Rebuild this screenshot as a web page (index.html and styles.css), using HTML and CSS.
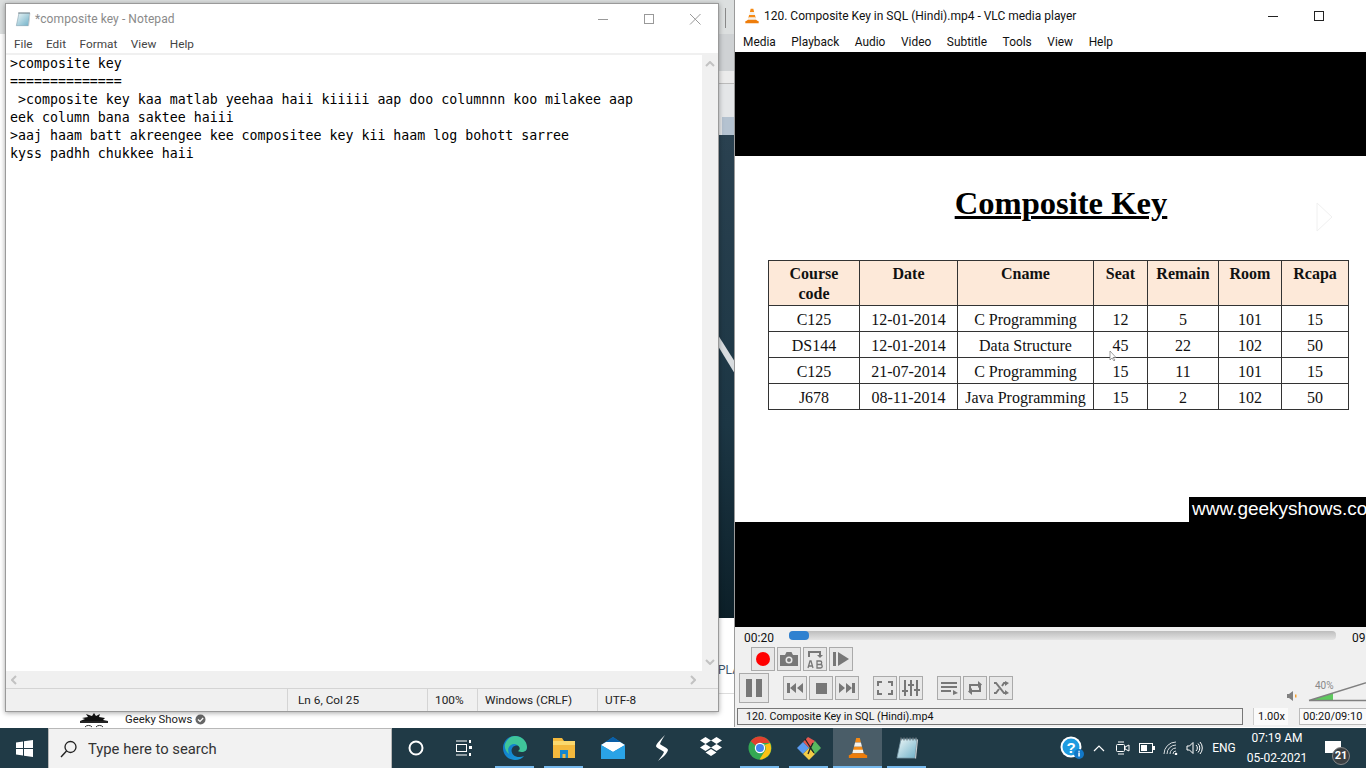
FILE: index.html
```html
<!DOCTYPE html>
<html lang="en">
<head>
    <meta charset="UTF-8">
    <meta name="viewport" content="width=device-width, initial-scale=1.0">
    <title>Notepad and VLC</title>
    <link rel="stylesheet" href="styles.css">
</head>
<body>
    <svg class="defs" width="0" height="0">
        <defs>
            <linearGradient id="pad-fill" x1="0" y1="0" x2="1" y2="1">
                <stop offset="0" stop-color="#eef7f7"/>
                <stop offset="1" stop-color="#6fb0c8"/>
            </linearGradient>
            <symbol id="i-cone" viewBox="0 0 24 24">
                <path d="M10 1h4l1.200 5H8.800z" fill="#f58a14"/>
                <path d="M8.800 6h6.400l1.200 4.600H7.600z" fill="#f2f0ec"/>
                <path d="M7.600 10.600h8.800l1.200 4.800H6.400z" fill="#f58a14"/>
                <path d="M6.700 14h10.600l.9 3.600H5.800z" fill="#f4f1ea"/>
                <path d="M5.800 17.600h12.400l1.800 1.400 2 1v3H2v-3l2-1z" fill="#ee7d0b"/>
            </symbol>
            <symbol id="i-pad" viewBox="0 0 24 24">
                <path d="M6 3h16l-2 19H2z" fill="url(#pad-fill)" stroke="#7a99a8" stroke-width=".8"/>
                <path d="M20 22l2-19 1 1-2 19z" fill="#c9ced2"/>
                <path d="M6 1.500v3M9 1.500v3M12 1.500v3M15 1.500v3M18 1.500v3M21 1.500v3" stroke="#6d7880" stroke-width="1.200"/>
            </symbol>
        </defs>
    </svg>

    <div class="desktop">
        <!-- browser page left behind the two windows -->
        <div class="backdrop">
            <div class="bd-top"><span class="bd-tick"></span></div>
            <div class="bd-band"></div>
            <div class="bd-band2"></div>
            <div class="bd-band3"><span class="bd-glass"></span></div>
            <div class="bd-video">
                <svg class="bd-slash" width="17" height="60" viewBox="0 0 17 60"><path d="M0 10l17 27v12L0 21z" fill="#d8dcdf"/></svg>
            </div>
            <div class="bd-page">
                <span class="bd-pla">PLA</span>
            </div>
            <div class="channel">
                <svg class="channel-pic" width="32" height="16" viewBox="0 0 32 16">
                    <path d="M2 9l5-2-3-1 6-1-2-3 6 2 2-3 2 3 4-2-1 3 6 1-2 2 5 1z" fill="#111"/>
                    <rect x="2" y="9" width="28" height="2" fill="#222"/>
                    <path d="M7 15a4 3 0 0 1 7 0M18 15a4 3 0 0 1 7 0" stroke="#333" fill="none"/>
                </svg>
                <span class="channel-name">Geeky Shows</span>
                <svg width="11" height="11" viewBox="0 0 11 11"><circle cx="5.500" cy="5.500" r="5" fill="#666"/><path d="M3 5.500l2 2 3.200-3.500" stroke="#fff" stroke-width="1.200" fill="none"/></svg>
            </div>
        </div>

        <!-- notepad -->
        <div class="window notepad">
            <div class="np-title">
                <svg class="np-icon" width="16" height="16"><use href="#i-pad"/></svg>
                <span class="np-name">*composite key - Notepad</span>
                <div class="np-ctl">
                    <svg width="46" height="30" viewBox="0 0 46 30"><path d="M18 15.500h10" stroke="#999"/></svg>
                    <svg width="46" height="30" viewBox="0 0 46 30"><rect x="18.500" y="10.500" width="9" height="9" fill="none" stroke="#999"/></svg>
                    <svg width="46" height="30" viewBox="0 0 46 30"><path d="M18 10l10.500 10.500M28.500 10L18 20.500" stroke="#999"/></svg>
                </div>
            </div>
            <div class="np-menu">
                <span>File</span><span>Edit</span><span>Format</span><span>View</span><span>Help</span>
            </div>
            <div class="np-body">
                <pre class="np-text">&gt;composite key
==============
 &gt;composite key kaa matlab yeehaa haii kiiiii aap doo columnnn koo milakee aap
eek column bana saktee haiii
&gt;aaj haam batt akreengee kee compositee key kii haam log bohott sarree
kyss padhh chukkee haii</pre>
                <div class="np-vscroll">
                    <svg width="10" height="6" viewBox="0 0 10 6"><path d="M1 5l4-4 4 4" fill="none" stroke="#c2c2c2" stroke-width="2"/></svg>
                    <svg width="10" height="6" viewBox="0 0 10 6"><path d="M1 1l4 4 4-4" fill="none" stroke="#c2c2c2" stroke-width="2"/></svg>
                </div>
            </div>
            <div class="np-hscroll">
                <svg width="6" height="10" viewBox="0 0 6 10"><path d="M5 1L1 5l4 4" fill="none" stroke="#c2c2c2" stroke-width="2"/></svg>
                <svg width="6" height="10" viewBox="0 0 6 10"><path d="M1 1l4 4-4 4" fill="none" stroke="#c2c2c2" stroke-width="2"/></svg>
            </div>
            <div class="np-status">
                <span class="st st-pos">Ln 6, Col 25</span>
                <span class="st st-zoom">100%</span>
                <span class="st st-eol">Windows (CRLF)</span>
                <span class="st st-enc">UTF-8</span>
            </div>
        </div>

        <!-- vlc -->
        <div class="window vlc">
            <div class="vlc-title">
                <svg width="16" height="16"><use href="#i-cone"/></svg>
                <span class="vlc-name">120. Composite Key in SQL (Hindi).mp4 - VLC media player</span>
                <svg class="vlc-min" width="12" height="12" viewBox="0 0 12 12"><path d="M1 6.500h10" stroke="#222"/></svg>
                <svg class="vlc-max" width="12" height="12" viewBox="0 0 12 12"><rect x="1.500" y="1.500" width="9" height="9" fill="none" stroke="#222"/></svg>
            </div>
            <div class="vlc-menu">
                <span>Media</span><span>Playback</span><span>Audio</span><span>Video</span><span>Subtitle</span><span>Tools</span><span>View</span><span>Help</span>
            </div>
            <div class="video-bar top"></div>
            <div class="slide">
                <h1 class="slide-title">Composite Key</h1>
                <table class="slide-table">
                    <colgroup>
                        <col class="c1"><col class="c2"><col class="c3"><col class="c4"><col class="c5"><col class="c6"><col class="c7">
                    </colgroup>
                    <thead>
                        <tr><th>Course<br>code</th><th>Date</th><th>Cname</th><th>Seat</th><th>Remain</th><th>Room</th><th>Rcapa</th></tr>
                    </thead>
                    <tbody>
                        <tr><td>C125</td><td>12-01-2014</td><td>C Programming</td><td>12</td><td>5</td><td>101</td><td>15</td></tr>
                        <tr><td>DS144</td><td>12-01-2014</td><td>Data Structure</td><td>45</td><td>22</td><td>102</td><td>50</td></tr>
                        <tr><td>C125</td><td>21-07-2014</td><td>C Programming</td><td>15</td><td>11</td><td>101</td><td>15</td></tr>
                        <tr><td>J678</td><td>08-11-2014</td><td>Java Programming</td><td>15</td><td>2</td><td>102</td><td>50</td></tr>
                    </tbody>
                </table>
                <svg class="slide-next" width="18" height="30" viewBox="0 0 18 30"><path d="M1 1l15 14L1 29z" fill="none" stroke="#f0f0f0"/></svg>
                <svg class="slide-cursor" width="8" height="12" viewBox="0 0 8 12"><path d="M1 1v9l2-2 2 3 1-1-2-2.500h3z" fill="#fff" stroke="#777" stroke-width=".7"/></svg>
                <div class="slide-url">www.geekyshows.com</div>
            </div>
            <div class="video-bar bottom"></div>

            <div class="controls">
                <div class="seek">
                    <span class="seek-now">00:20</span>
                    <div class="seek-track"><div class="seek-fill"></div></div>
                    <span class="seek-end">09:10</span>
                </div>
                <div class="ctl-row row-adv">
                    <div class="btn"><span class="rec"></span></div>
                    <div class="btn"><svg width="20" height="16" viewBox="0 0 20 16"><path d="M1 4h5l1.500-3h5L14 4h5v11H1z" fill="#777"/><circle cx="10" cy="9" r="3.500" fill="#e8e8e8"/><circle cx="10" cy="9" r="2" fill="#777"/></svg></div>
                    <div class="btn"><svg width="18" height="20" viewBox="0 0 18 20"><path d="M3 8V3h11v3" fill="none" stroke="#777" stroke-width="2"/><path d="M11 6h6l-3 3z" fill="#777"/><path d="M2 19l2-7h1l2 7M3 17h3M11 12h3a1.500 1.500 0 0 1 0 3.500h-3zM11 15.500h3.500a1.700 1.700 0 0 1 0 3.500H11z" fill="none" stroke="#777" stroke-width="1.300"/></svg></div>
                    <div class="btn"><svg width="18" height="16" viewBox="0 0 18 16"><rect x="1" y="1" width="3" height="14" fill="#777"/><path d="M6 1l11 7-11 7z" fill="#777"/></svg></div>
                </div>
                <div class="ctl-row row-main">
                    <div class="btn btn-big"><svg width="16" height="18" viewBox="0 0 16 18"><rect width="6" height="18" fill="#777"/><rect x="10" width="6" height="18" fill="#777"/></svg></div>
                    <div class="group">
                        <div class="btn"><svg width="16" height="10" viewBox="0 0 16 10"><rect width="3" height="10" fill="#777"/><path d="M9 0v10L3 5zM16 0v10L10 5z" fill="#777"/></svg></div>
                        <div class="btn"><svg width="11" height="11"><rect width="11" height="11" fill="#777"/></svg></div>
                        <div class="btn"><svg width="16" height="10" viewBox="0 0 16 10"><path d="M0 0v10l6-5zM7 0v10l6-5z" fill="#777"/><rect x="13" width="3" height="10" fill="#777"/></svg></div>
                    </div>
                    <div class="group">
                        <div class="btn"><svg width="16" height="14" viewBox="0 0 16 14"><path d="M1 5V1h4M11 1h4v4M15 9v4h-4M5 13H1V9" fill="none" stroke="#777" stroke-width="2"/></svg></div>
                        <div class="btn"><svg width="18" height="16" viewBox="0 0 18 16"><path d="M3 0v16M9 0v16M15 0v16" stroke="#777" stroke-width="2"/><path d="M0 10h6v2H0zM6 4h6v2H6zM12 9h6v2h-6z" fill="#777"/></svg></div>
                    </div>
                    <div class="group">
                        <div class="btn"><svg width="18" height="14" viewBox="0 0 18 14"><path d="M1 2h16M1 6h16M1 10h10" stroke="#777" stroke-width="2"/><path d="M13 9l5 3-5 2z" fill="#777"/></svg></div>
                        <div class="btn"><svg width="18" height="14" viewBox="0 0 18 14"><path d="M4 10V4h9M14 4v6H5" fill="none" stroke="#777" stroke-width="2"/><path d="M12 0l4 3.500-4 3.500zM6 7l-4 3.500L6 14z" fill="#777"/></svg></div>
                        <div class="btn"><svg width="16" height="14" viewBox="0 0 16 14"><path d="M1 2h2l8 10h1M1 12h2l3-4M9 5l2-3h1" fill="none" stroke="#777" stroke-width="2"/><path d="M12 0l4 2-4 3zM12 9l4 3-4 2z" fill="#777"/></svg></div>
                    </div>
                    <div class="volume">
                        <svg class="vol-icon" width="11" height="12" viewBox="0 0 11 12"><path d="M1 4h2l4-3v10L3 8H1z" fill="#808080"/><rect x="9" y="4.500" width="1.500" height="3" fill="#f5a030"/></svg>
                        <div class="vol-slider">
                            <span class="vol-pct">40%</span>
                            <svg width="100" height="28" viewBox="0 0 100 28"><path d="M2 26.500L26 26.500V19z" fill="#5ec95e"/><path d="M2 26.500L90 -1M2 26.500H98" stroke="#808080" stroke-width="1.500" fill="none"/></svg>
                        </div>
                    </div>
                </div>
                <div class="vlc-status">
                    <div class="file-box">120. Composite Key in SQL (Hindi).mp4</div>
                    <div class="rate-box">1.00x</div>
                    <div class="time-box">00:20/09:10</div>
                </div>
            </div>
        </div>

        <!-- taskbar -->
        <div class="taskbar">
            <div class="start">
                <svg width="17" height="17" viewBox="0 0 17 17"><path d="M0 2.500l7-1v6.500H0zM8 1.300L17 0v8H8zM0 9h7v6.500l-7-1zM8 9h9v8l-9-1.300z" fill="#fff"/></svg>
            </div>
            <div class="search">
                <svg width="18" height="18" viewBox="0 0 18 18"><circle cx="10.500" cy="7" r="5.500" fill="none" stroke="#222" stroke-width="1.300"/><path d="M6.500 11L1 17" stroke="#222" stroke-width="1.400"/></svg>
                <span>Type here to search</span>
            </div>
            <div class="task-tool">
                <svg width="16" height="16" viewBox="0 0 16 16"><circle cx="8" cy="8" r="6.500" fill="none" stroke="#fff" stroke-width="2"/></svg>
            </div>
            <div class="task-tool">
                <svg width="17" height="16" viewBox="0 0 17 16"><path d="M0 1h11M0 15h11" stroke="#fff"/><rect x=".5" y="4.500" width="10" height="7" fill="none" stroke="#fff"/><path d="M14 0v3M14 13v3" stroke="#fff" stroke-width="2"/><rect x="13" y="6" width="3" height="3" fill="#fff"/></svg>
            </div>
            <div class="apps">
                <div class="app on">
                    <svg width="26" height="26" viewBox="0 0 26 26">
                        <defs><linearGradient id="edge" x1="0" y1="0" x2="1" y2="1"><stop offset="0" stop-color="#0f6fc4"/><stop offset="1" stop-color="#1a9fdc"/></linearGradient></defs>
                        <path d="M13 1C6 1 1 6.500 1 13c0 7 5.500 12 12 12 4 0 7-1.500 9-4-3 1.500-8 1.500-10.500-1-2.500-2.500-2.500-6-.5-8 2-2 6-2 8 0 1 1 1.500 2.500 1 3.500h4c1-2 .5-5-1-8C21.500 3.500 17.500 1 13 1z" fill="url(#edge)"/>
                        <path d="M13 1c6 0 12 4.500 12 11 0 3-2 5-5.500 5-2 0-3.500-1-3.500-1 1.500-.5 2-2 1.500-3.500C16 9.500 12 8 9 10c-3 2-3.500 5-2 9-3-2-5-6-4-10C5 4 9 1 13 1z" fill="#3fc59a"/>
                    </svg>
                </div>
                <div class="app on">
                    <svg width="24" height="22" viewBox="0 0 24 22"><path d="M1 1h9l2 3h11v17H1z" fill="#f4b93d"/><rect x="1" y="4" width="22" height="4" fill="#fbd86d"/><path d="M8 13h8v8h-2.500v-4h-3v4H8z" fill="#1787cc"/></svg>
                </div>
                <div class="app">
                    <svg width="24" height="24" viewBox="0 0 24 24"><path d="M12 1l12 8v14H0V9z" fill="#0f7ecb"/><path d="M0 9l12 7 12-7-5-3H5z" fill="#fff"/><path d="M0 9v14h24V9l-12 7z" fill="#2aa3e6"/><path d="M12 1L5 6h14z" fill="#0a5fa8"/></svg>
                </div>
                <div class="app">
                    <svg width="14" height="26" viewBox="0 0 14 26"><path d="M10 0C6 4 2 8 1 11c0 2 6 4 8 6-1 3-4 6-6 9 4-3 9-7 10-11 0-2-6-4-8-6 1-3 3-6 5-9z" fill="#fff"/></svg>
                </div>
                <div class="app">
                    <svg width="24" height="22" viewBox="0 0 24 22"><path d="M6.500 0L12 3.500 6.500 7 1 3.500zM17.500 0L23 3.500 17.500 7 12 3.500zM6.500 7L12 10.500 6.500 14 1 10.500zM17.500 7L23 10.500 17.500 14 12 10.500zM6.500 15.500L12 12l5.500 3.500L12 19z" fill="#fff"/></svg>
                </div>
                <div class="app on">
                    <svg width="24" height="24" viewBox="0 0 24 24"><circle cx="12" cy="12" r="11.500" fill="#34a853"/><path d="M12 .5A11.500 11.500 0 0 1 22 7H12a5 5 0 0 0-4.400 2.600L2.700 5.200A11.500 11.500 0 0 1 12 .5z" fill="#e2402f"/><path d="M22 7a11.500 11.500 0 0 1-10.500 16.500l5-8A5 5 0 0 0 16.500 9z" fill="#fbc116"/><circle cx="12" cy="12" r="5.200" fill="#fff"/><circle cx="12" cy="12" r="4" fill="#4284f2"/></svg>
                </div>
                <div class="app on">
                    <svg width="24" height="24" viewBox="0 0 24 24"><path d="M12 12L6 6l5-5 7 4z" fill="#e4574f"/><path d="M12 12L6 6 0 12l6 6z" fill="#5b9bf0"/><path d="M12 12l-6 6 6 6 6-6z" fill="#f4cb46"/><path d="M12 12l6 6 6-6-6-7z" fill="#58b95f"/><path d="M8 3l9 14M16 7l-3 6M13 13l-2 5" stroke="#222" stroke-width="1.300" fill="none"/></svg>
                </div>
                <div class="app on active">
                    <svg width="22" height="24"><use href="#i-cone"/></svg>
                </div>
                <div class="app on">
                    <svg width="24" height="24"><use href="#i-pad"/></svg>
                </div>
            </div>
            <div class="tray">
                <div class="tray-item w-help">
                    <svg width="24" height="24" viewBox="0 0 24 24"><circle cx="11" cy="11" r="10.500" fill="#fff"/><circle cx="11" cy="11" r="8.500" fill="#1e9be0"/><text x="11" y="16.500" text-anchor="middle" class="help-q">?</text><circle cx="19" cy="18" r="5" fill="#1278c8"/><rect x="18.300" y="16.500" width="1.500" height="4" fill="#fff"/><rect x="18.300" y="14.800" width="1.500" height="1" fill="#fff"/></svg>
                </div>
                <div class="tray-item w-icon">
                    <svg width="12" height="8" viewBox="0 0 12 8"><path d="M1 7l5-5 5 5" fill="none" stroke="#fff" stroke-width="1.200"/></svg>
                </div>
                <div class="tray-item w-icon">
                    <svg width="16" height="16" viewBox="0 0 16 16"><rect x="1.500" y="4.500" width="8" height="7" rx="1" fill="none" stroke="#fff"/><path d="M10 7l4-2v6l-4-2zM3 2h6M3 14h6" stroke="#fff" fill="none"/></svg>
                </div>
                <div class="tray-item w-icon">
                    <svg width="16" height="10" viewBox="0 0 16 10"><rect x=".5" y=".5" width="13" height="9" fill="none" stroke="#fff"/><rect x="2" y="2" width="6" height="6" fill="#fff"/><rect x="14" y="3" width="2" height="4" fill="#fff"/></svg>
                </div>
                <div class="tray-item w-icon">
                    <svg width="16" height="14" viewBox="0 0 16 14"><path d="M1 13A12 12 0 0 1 13 1M4 13a9 9 0 0 1 9-9M7 13a6 6 0 0 1 6-6M10 13a3 3 0 0 1 3-3" fill="none" stroke="#d8dde0"/><circle cx="13" cy="13" r="1.300" fill="#fff"/></svg>
                </div>
                <div class="tray-item w-icon">
                    <svg width="18" height="14" viewBox="0 0 18 14"><path d="M1 5h2.500L7 1.500v11L3.500 9H1z" fill="none" stroke="#fff"/><path d="M10 4a4 4 0 0 1 0 6M12 2.500a6.500 6.500 0 0 1 0 9M14 1a9 9 0 0 1 0 12" fill="none" stroke="#fff"/></svg>
                </div>
                <div class="tray-lang">ENG</div>
                <div class="clock"><span>07:19 AM</span><span>05-02-2021</span></div>
                <div class="notif">
                    <svg width="16" height="13" viewBox="0 0 16 13"><path d="M0 0h16v12H0z" fill="#fff"/></svg>
                    <span class="notif-badge">21</span>
                </div>
            </div>
        </div>
    </div>
</body>
</html>
```

FILE: styles.css
```css
body {
    margin: 0;
    padding: 0;
    font-family: Roboto, 'Noto Sans', sans-serif;
    font-size: 12px;
    color: #111;
    overflow: hidden;
}

.defs {
    position: absolute;
}

.desktop {
    position: relative;
    width: 1366px;
    height: 768px;
    overflow: hidden;
    background-color: #fff;
    display: flex;
    flex-direction: column;
    justify-content: flex-end;
}

/* page behind the windows */
.backdrop {
    position: absolute;
    left: 0;
    top: 0;
    width: 735px;
    height: 728px;
    background-color: #fff;
}

.bd-top {
    height: 34px;
    background-color: #dcdfdf;
    display: flex;
    justify-content: flex-end;
}

.bd-tick {
    width: 1px;
    height: 20px;
    margin: 8px 9px 0 0;
    background-color: #888;
}

.bd-band, .bd-band2, .bd-band3 {
    margin-left: 600px;
}

.bd-band {
    height: 37px;
    background-color: #cfd2d4;
}

.bd-band2 {
    height: 12px;
    background-color: #ebebeb;
    border-bottom: 1px solid #bbb;
}

.bd-band3 {
    height: 51px;
    background-color: #e4e6e8;
    display: flex;
    justify-content: flex-end;
    align-items: flex-end;
}

.bd-glass {
    width: 13px;
    height: 18px;
    background-color: #b4c2d0;
}

.bd-video {
    position: relative;
    margin-left: 600px;
    height: 483px;
    background: linear-gradient(#2a4150, #1c3644 60%, #0c1f28);
}

.bd-slash {
    position: absolute;
    right: 0;
    top: 190px;
}

.bd-page {
    position: relative;
    height: 110px;
}

.bd-pla {
    position: absolute;
    left: 718px;
    top: 45px;
    color: #3d566c;
    font-size: 12px;
}

.bd-page::after {
    content: '';
    position: absolute;
    left: 600px;
    right: 0;
    top: 75px;
    height: 1px;
    background-color: #ddd;
}

.channel {
    position: absolute;
    left: 78px;
    top: 712px;
    height: 16px;
    display: flex;
    align-items: flex-start;
    overflow: hidden;
}

.channel-name {
    margin-left: 15px;
    line-height: 16px;
    font-size: 11.3px;
    color: #222;
}

.channel svg:last-child {
    margin: 2px 0 0 3px;
}

/* windows */
.window {
    position: absolute;
    box-sizing: border-box;
    background-color: #fff;
    display: flex;
    flex-direction: column;
}

.notepad {
    left: 5px;
    top: 3px;
    width: 714px;
    height: 709px;
    border: 1px solid #9a9a9a;
    box-shadow: 0 1px 5px rgba(0, 0, 0, 0.35);
    font-size: 11.8px;
}

.np-title {
    height: 30px;
    flex: none;
    display: flex;
    align-items: center;
    padding-left: 9px;
}

.np-name {
    margin-left: 4px;
    color: #8a8a8a;
    font-size: 12px;
    letter-spacing: 0.08px;
}

.np-ctl {
    margin-left: auto;
    display: flex;
    margin-right: 0;
}

.np-menu {
    height: 19px;
    flex: none;
    display: flex;
    gap: 13.5px;
    padding-left: 8px;
    align-items: center;
    color: #444;
}

.np-body {
    flex: 1;
    min-height: 0;
    display: flex;
    border-top: 2px solid #f0f0f0;
}

.np-text {
    flex: 1;
    margin: 0;
    padding: 0 0 0 4px;
    font-family: 'DejaVu Sans Mono', monospace;
    font-size: 13.28px;
    line-height: 18px;
    color: #000;
    white-space: pre;
    overflow: hidden;
}

.np-vscroll {
    width: 16px;
    flex: none;
    background-color: #f0f0f0;
    display: flex;
    flex-direction: column;
    align-items: center;
    justify-content: space-between;
    padding: 6px 0;
    box-sizing: border-box;
}

.np-hscroll {
    height: 17px;
    flex: none;
    background-color: #f0f0f0;
    display: flex;
    align-items: center;
    justify-content: space-between;
    padding: 0 22px 0 5px;
    box-sizing: border-box;
}

.np-status {
    height: 23px;
    flex: none;
    display: flex;
    background-color: #f0f0f0;
    border-top: 1px solid #d4d4d4;
    box-sizing: border-box;
    padding-left: 281px;
    color: #222;
}

.st {
    border-left: 1px solid #d4d4d4;
    padding-left: 10px;
    line-height: 22px;
    height: 22px;
    box-sizing: border-box;
}

.st-pos { width: 140px; }
.st-zoom { width: 50px; padding-left: 7px; }
.st-eol { width: 120px; padding-left: 7px; }
.st-enc { padding-left: 7px; }

.vlc {
    left: 734px;
    top: 0;
    width: 660px;
    height: 727px;
    border-left: 1px solid #9a9a9a;
}

.vlc-title {
    height: 30px;
    flex: none;
    display: flex;
    align-items: center;
    padding-left: 9px;
    padding-top: 2px;
    box-sizing: border-box;
}

.vlc-name {
    margin-left: 4px;
    color: #111;
}

.vlc-min {
    margin-left: 191px;
}

.vlc-max {
    margin-left: 34px;
}

.vlc-menu {
    height: 22px;
    flex: none;
    display: flex;
    gap: 15.6px;
    padding-left: 8px;
    padding-top: 1px;
    box-sizing: border-box;
    align-items: center;
    font-size: 11.9px;
    color: #111;
}

.video-bar {
    flex: none;
    background-color: #000;
}

.video-bar.top { height: 104px; }
.video-bar.bottom { height: 105px; }

.slide {
    position: relative;
    height: 366px;
    flex: none;
    background-color: #fff;
    padding-left: 33px;
    font-family: 'Liberation Serif', serif;
    color: #111;
}

.slide-title {
    margin: 27px 0 0 0;
    width: 586px;
    height: 77px;
    text-align: center;
    font-size: 32.6px;
    line-height: 40px;
    font-weight: bold;
    text-decoration: underline;
    text-decoration-thickness: 3px;
    color: #000;
}

.slide-table {
    border-collapse: collapse;
    table-layout: fixed;
    width: 580px;
    font-size: 16px;
}

.c1 { width: 91px; }
.c2 { width: 98px; }
.c3 { width: 136px; }
.c4 { width: 54px; }
.c5 { width: 71px; }
.c6 { width: 63px; }
.c7 { width: 67px; }

.slide-table th, .slide-table td {
    border: 1px solid #333;
    text-align: center;
    padding: 0;
}

.slide-table th {
    height: 45px;
    background-color: #fde9d9;
    vertical-align: top;
    line-height: 20px;
    padding-top: 3px;
    box-sizing: border-box;
}

.slide-table td {
    height: 25px;
    line-height: 23px;
    padding-top: 2px;
    box-sizing: border-box;
}

.slide-next {
    position: absolute;
    left: 581px;
    top: 46px;
}

.slide-cursor {
    position: absolute;
    left: 374px;
    top: 194px;
}

.slide-url {
    position: absolute;
    left: 454px;
    bottom: 0;
    width: 200px;
    height: 25px;
    box-sizing: border-box;
    padding-left: 3px;
    background-color: #000;
    color: #fff;
    font-family: 'Liberation Sans', sans-serif;
    font-size: 19px;
    line-height: 23px;
    white-space: nowrap;
}

.controls {
    flex: 1;
    background-color: #f0f0f0;
    font-size: 12px;
    display: flex;
    flex-direction: column;
}

.seek {
    height: 20px;
    display: flex;
    align-items: center;
    padding-left: 9px;
    padding-top: 1px;
    box-sizing: border-box;
    flex: none;
}

.seek-now {
    width: 45px;
}

.seek-track {
    width: 547px;
    height: 9px;
    margin-top: -5px;
    border-radius: 4px;
    background: linear-gradient(#bdbdbd, #e4e4e4);
}

.seek-fill {
    width: 20px;
    height: 9px;
    border-radius: 4px;
    background-color: #2f81d0;
}

.seek-end {
    margin-left: 16px;
}

.ctl-row {
    display: flex;
    flex: none;
    align-items: center;
}

.row-adv {
    gap: 2px;
    padding-left: 16px;
    height: 24px;
}

.row-main {
    padding-left: 4px;
    margin-top: 2px;
    height: 30px;
    gap: 14px;
}

.group {
    display: flex;
    flex: none;
    gap: 2px;
}

.btn {
    box-sizing: border-box;
    width: 24px;
    height: 24px;
    flex: none;
    border: 1px solid #aaa;
    background-color: #e8e8e8;
    display: flex;
    align-items: center;
    justify-content: center;
}

.btn-big {
    width: 30px;
    height: 30px;
}

.rec {
    width: 14px;
    height: 14px;
    border-radius: 50%;
    background-color: #f00;
}

.volume {
    position: relative;
    display: flex;
    flex: none;
    align-items: center;
    margin-left: 259px;
    height: 30px;
}

.vol-icon {
    margin-top: 16px;
}

.vol-slider {
    position: relative;
    margin-left: 10px;
    width: 100px;
    height: 28px;
}

.vol-pct {
    position: absolute;
    left: 8px;
    top: 6px;
    font-size: 10px;
    color: #888;
}

.vol-slider svg {
    display: block;
    overflow: visible;
}

.vlc-status {
    display: flex;
    flex: none;
    align-items: center;
    height: 16px;
    margin-top: 5px;
    padding-left: 2px;
}

.file-box {
    box-sizing: border-box;
    width: 506px;
    flex: none;
    height: 17px;
    border: 1px solid #777;
    padding-left: 8px;
    line-height: 16px;
    font-size: 10.7px;
}

.rate-box {
    box-sizing: border-box;
    margin-left: 10px;
    width: 35px;
    flex: none;
    height: 17px;
    padding-left: 4px;
    line-height: 17px;
    font-size: 11px;
    background-color: #fafafa;
    border-left: 1px solid #ccc;
}

.time-box {
    box-sizing: border-box;
    margin-left: 11px;
    width: 90px;
    flex: none;
    height: 17px;
    padding-left: 3px;
    line-height: 16px;
    font-size: 11px;
    border: 1px solid #bbb;
    background-color: #fafafa;
}

/* taskbar */
.taskbar {
    position: relative;
    height: 40px;
    flex: none;
    background-color: #203a46;
    display: flex;
    align-items: stretch;
    color: #fff;
}

.start {
    width: 48px;
    display: flex;
    align-items: center;
    justify-content: center;
}

.search {
    width: 344px;
    box-sizing: border-box;
    background-color: #f2f2f2;
    border: 1px solid #b8b8b8;
    border-bottom: 0;
    display: flex;
    align-items: center;
    padding-left: 11px;
    color: #333;
    font-size: 14.8px;
}

.search span {
    margin-left: 10px;
}

.task-tool {
    width: 48px;
    display: flex;
    align-items: center;
    justify-content: center;
}

.apps {
    display: flex;
    margin-left: 2px;
}

.app {
    position: relative;
    width: 49px;
    display: flex;
    align-items: center;
    justify-content: center;
}

.app.on::after {
    content: '';
    position: absolute;
    left: 5px;
    right: 5px;
    bottom: 0;
    height: 2px;
    background-color: #76b9ed;
}

.app.active {
    background-color: #4a5d68;
}

.app.active::after {
    left: 0;
    right: 0;
}

.tray {
    margin-left: auto;
    margin-right: 9px;
    display: flex;
    align-items: center;
    height: 100%;
}

.tray-item {
    display: flex;
    align-items: center;
    justify-content: center;
}

.w-help { width: 28px; margin-right: 1px; }
.w-icon { width: 24px; }

.help-q {
    font-family: 'Liberation Sans', sans-serif;
    font-size: 15px;
    font-weight: bold;
    fill: #fff;
}

.tray-lang {
    width: 34px;
    text-align: center;
    font-size: 12px;
}

.clock {
    width: 64px;
    margin-left: 4px;
    display: flex;
    flex-direction: column;
    align-items: center;
    font-size: 12px;
    line-height: 20px;
}

.notif {
    position: relative;
    width: 48px;
    height: 100%;
    display: flex;
    align-items: center;
    justify-content: center;
}

.notif svg {
    margin-top: -2px;
}

.notif-badge {
    position: absolute;
    left: 23px;
    top: 19px;
    width: 18px;
    height: 18px;
    border-radius: 50%;
    background-color: #3a3f42;
    border: 1px solid #888;
    box-sizing: border-box;
    font-size: 11px;
    font-weight: bold;
    line-height: 16px;
    text-align: center;
}
```
